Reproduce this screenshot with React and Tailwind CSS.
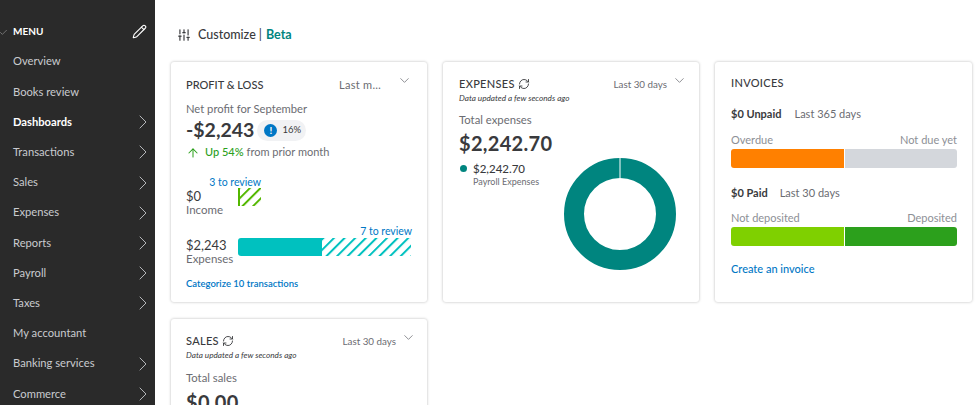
import React from "react";
import { ChevronRight, ChevronDown, Pencil, RefreshCw, ArrowUp, SlidersVertical, Check } from "lucide-react";

const nav = [
  ["Overview", false, false],
  ["Books review", false, false],
  ["Dashboards", true, true],
  ["Transactions", true, false],
  ["Sales", true, false],
  ["Expenses", true, false],
  ["Reports", true, false],
  ["Payroll", true, false],
  ["Taxes", true, false],
  ["My accountant", false, false],
  ["Banking services", true, false],
  ["Commerce", true, false],
];

function Hatch({ id, color, w, h, border }) {
  return (
    <svg width={w} height={h} className="block shrink-0">
      <defs>
        <pattern id={id} width="7.5" height="8" patternUnits="userSpaceOnUse" patternTransform="rotate(45)">
          <rect x="0" y="0" width="2" height="8" fill={color} />
        </pattern>
      </defs>
      <rect width={w} height={h} fill={`url(#${id})`} />
      {border && <rect width="2" height={h} fill={color} />}
    </svg>
  );
}

function Card({ children, className = "" }) {
  return (
    <div className={"relative h-[240px] rounded-[3px] bg-white shadow-[0_0_3px_rgba(0,0,0,0.28)] " + className}>
      {children}
    </div>
  );
}

function PeriodHeader({ title, period }) {
  return (
    <div className="flex items-start justify-between">
      <div>
        <div className="flex h-[16px] items-center gap-[3px] text-[11px] font-medium leading-[16px] tracking-[0.3px] text-[#393a3d]">
          {title}
          <RefreshCw size={12} strokeWidth={1.8} className="text-[#393a3d]" />
        </div>
        <div className="mt-[1px] text-[8.2px] italic leading-[10px] text-[#393a3d]">Data updated a few seconds ago</div>
      </div>
      <div className="flex items-start">
        <span className="mt-[2px] text-[9.8px] leading-[13px] text-[#6b6c72]">{period}</span>
        <ChevronDown size={15} strokeWidth={1.2} className="ml-[5px] mr-[-4px] mt-[-3px] text-[#6b6c72]" />
      </div>
    </div>
  );
}

export default function App() {
  return (
    <div className="flex h-[405px] w-[980px] overflow-hidden bg-white font-['Lato','Noto_Sans',sans-serif]">
      <aside className="w-[155px] shrink-0 bg-[#2a2a2a] pt-[16.8px] text-[#d4d7dc]">
        <div className="relative flex h-[30px] items-center pl-[13px] pr-[8px]">
          <Check size={9} strokeWidth={1.5} className="absolute left-[-1px] top-[11px] text-[#a8a8a8]" />
          <span className="text-[10px] font-bold text-white">MENU</span>
          <Pencil size={15} strokeWidth={1.75} className="ml-auto text-white" />
        </div>
        {nav.map(([label, chev, active]) => (
          <div key={label} className="flex h-[30.2px] items-center pl-[13px]">
            <span className={"text-[11.2px] " + (active ? "font-bold text-white" : "text-[#c9cbcf]")}>{label}</span>
            {chev && <ChevronRight size={24} strokeWidth={1} className="ml-auto text-[#b5b7ba]" />}
          </div>
        ))}
      </aside>

      <main className="min-w-0 flex-1 pl-[16px] pr-[7px]">
        <div className="flex h-[62px] items-start pl-[6px] pt-[27px]">
          <SlidersVertical size={14} strokeWidth={2} className="mt-[1px] text-[#393a3d]" />
          <span className="ml-[7px] text-[12.5px] font-medium leading-[16px] text-[#393a3d]">Customize</span>
          <span className="ml-[3px] text-[12.5px] leading-[16px] text-[#393a3d]">|</span>
          <span className="ml-[4px] text-[12.5px] font-bold leading-[16px] text-[#00857f]">Beta</span>
        </div>

        <div className="grid grid-cols-[256px_256px_257px] gap-x-[16px] gap-y-[17px]">
          {/* Profit & Loss */}
          <Card className="px-[15px] pt-[15px]">
            <div className="flex items-start justify-between">
              <span className="text-[11px] font-medium leading-[15px] text-[#393a3d]">PROFIT &amp; LOSS</span>
              <div className="flex items-start">
                <span className="text-[11px] leading-[15px] tracking-[0.3px] text-[#6b6c72]">Last m…</span>
                <ChevronDown size={15} strokeWidth={1.2} className="ml-[16px] mr-0 mt-[-4px] text-[#6b6c72]" />
              </div>
            </div>
            <div className="mt-[9px] text-[11.2px] leading-[15px] text-[#6b6c72]">Net profit for September</div>
            <div className="mt-[3px] flex h-[22px] items-center">
              <span className="text-[19.5px] font-bold leading-[22px] text-[#393a3d]">-$2,243</span>
              <span className="ml-[3px] flex h-[21px] w-[49px] items-center rounded-full bg-[#f1f2f4] pl-[7px]">
                <span className="flex h-[13px] w-[13px] items-center justify-center rounded-full bg-[#0077c5] text-[10px] font-bold leading-none text-white">!</span>
                <span className="ml-[5px] text-[9.5px] text-[#393a3d]">16%</span>
              </span>
            </div>
            <div className="mt-[3px] flex h-[17px] items-center text-[11px]">
              <ArrowUp size={14} strokeWidth={1.75} className="text-[#2ca01c]" />
              <span className="ml-[5px] font-medium text-[#2ca01c]">Up 54%</span>
              <span className="ml-[3px] text-[#6b6c72]">from prior month</span>
            </div>
            <div className="mt-[14px] flex">
              <div className="w-[52px] pt-[13px]">
                <div className="text-[13px] leading-[16px] text-[#393a3d]">$0</div>
                <div className="text-[11.5px] leading-[12px] text-[#6b6c72]">Income</div>
              </div>
              <div className="flex w-[23px] flex-col items-end">
                <div className="whitespace-nowrap text-[10.5px] leading-[14px] text-[#0077c5]">3 to review</div>
                <div className="mt-[-1px]">
                  <Hatch id="h1" color="#53b700" w={23} h={18} border />
                </div>
              </div>
            </div>
            <div className="mt-[8px] flex">
              <div className="w-[52px] pt-[13px]">
                <div className="text-[13px] leading-[16px] text-[#393a3d]">$2,243</div>
                <div className="text-[11.5px] leading-[12px] text-[#6b6c72]">Expenses</div>
              </div>
              <div className="flex-1">
                <div className="text-right text-[10.5px] leading-[14px] text-[#0077c5]">7 to review</div>
                <div className="flex">
                  <div className="h-[18px] w-[84px] rounded-l-[3px] bg-[#00c1bf]" />
                  <Hatch id="h2" color="#00c1bf" w={89} h={18} />
                </div>
              </div>
            </div>
            <div className="mt-[12px] text-[9.5px] font-semibold leading-[13px] text-[#0077c5]">Categorize 10 transactions</div>
          </Card>

          {/* Expenses */}
          <Card className="px-[16px] pt-[14px]">
            <PeriodHeader title="EXPENSES" period="Last 30 days" />
            <div className="flex justify-between">
              <div>
                <div className="mt-[9px] text-[11.3px] leading-[15px] text-[#6b6c72]">Total expenses</div>
                <div className="mt-[4px] text-[20px] font-bold leading-[24px] tracking-[0.3px] text-[#393a3d]">$2,242.70</div>
                <div className="mt-[6px] flex">
                  <span className="ml-[1px] mt-[4px] h-[7px] w-[7px] rounded-full bg-[#00857f]" />
                  <div className="ml-[6px]">
                    <div className="text-[11.5px] font-medium leading-[15px] text-[#393a3d]">$2,242.70</div>
                    <div className="mt-[1px] text-[9px] leading-[10px] text-[#6b6c72]">Payroll Expenses</div>
                  </div>
                </div>
              </div>
              <svg width="112" height="112" viewBox="0 0 112 112" className="mr-[7px] mt-[55px] shrink-0">
                <circle cx="56" cy="56" r="46" fill="none" stroke="#00857f" strokeWidth="20" />
                <rect x="55.5" y="0" width="1" height="20" fill="#ffffff" />
              </svg>
            </div>
          </Card>

          {/* Invoices */}
          <Card className="pl-[16px] pr-[15px] pt-[13px]">
            <div className="text-[11px] font-medium leading-[15px] tracking-[0.3px] text-[#393a3d]">INVOICES</div>
            <div className="mt-[16px] flex h-[15px] items-center text-[11px] leading-[15px]">
              <span className="font-bold text-[#393a3d]">$0 Unpaid</span>
              <span className="ml-[13px] text-[#6b6c72]">Last 365 days</span>
            </div>
            <div className="mt-[11px] flex justify-between text-[11px] leading-[15px] text-[#8d9096]">
              <span>Overdue</span>
              <span>Not due yet</span>
            </div>
            <div className="mt-[2px] flex h-[19px] w-[226px] gap-[1px]">
              <div className="flex-1 rounded-l-[3px] bg-[#ff8000]" />
              <div className="flex-1 rounded-r-[3px] bg-[#d4d7dc]" />
            </div>
            <div className="mt-[17px] flex h-[15px] items-center text-[11px] leading-[15px]">
              <span className="font-bold text-[#393a3d]">$0 Paid</span>
              <span className="ml-[12px] text-[#6b6c72]">Last 30 days</span>
            </div>
            <div className="mt-[10px] flex justify-between text-[11px] leading-[15px] text-[#8d9096]">
              <span>Not deposited</span>
              <span>Deposited</span>
            </div>
            <div className="mt-[2px] flex h-[19px] w-[226px] gap-[1px]">
              <div className="flex-1 rounded-l-[3px] bg-[#7fd000]" />
              <div className="flex-1 rounded-r-[3px] bg-[#2ca01c]" />
            </div>
            <div className="mt-[15px] text-[11px] font-medium leading-[15px] text-[#0077c5]">Create an invoice</div>
          </Card>

          {/* Sales */}
          <Card className="px-[15px] pt-[14px]">
            <PeriodHeader title="SALES" period="Last 30 days" />
            <div className="mt-[10px] text-[11.3px] leading-[15px] text-[#6b6c72]">Total sales</div>
            <div className="mt-[5px] text-[20px] font-bold leading-[24px] tracking-[0.3px] text-[#393a3d]">$0.00</div>
          </Card>
        </div>
      </main>
    </div>
  );
}
